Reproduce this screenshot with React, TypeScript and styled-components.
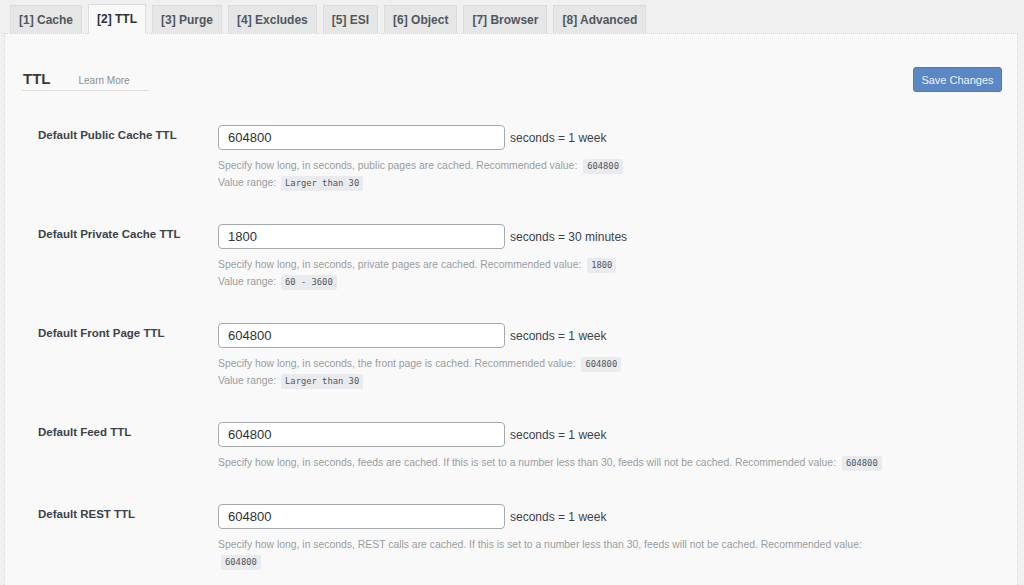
import React from "react";
import styled, { createGlobalStyle } from "styled-components";

const Global = createGlobalStyle`
  html, body { margin: 0; padding: 0; background: #f0f0f1; }
  body { font-family: "Liberation Sans", Arial, sans-serif; color: #3c434a; }
`;

const Page = styled.div`
  padding: 4px 6px 0 4px;
  width: 1024px;
  box-sizing: border-box;
  height: 585px;
  overflow: hidden;
`;

const TabBar = styled.div`
  display: flex;
  gap: 6px;
  padding-left: 6px;
  align-items: flex-end;
  height: 29px;
  position: relative;
  z-index: 1;
`;

const Tab = styled.div<{ $active?: boolean }>`
  box-sizing: border-box;
  height: ${(p) => (p.$active ? "30px" : "28px")};
  margin-bottom: ${(p) => (p.$active ? "-1px" : "0")};
  padding: 0 8px;
  display: flex;
  align-items: center;
  font-size: 12px;
  font-weight: 700;
  color: ${(p) => (p.$active ? "#2c3338" : "#50575e")};
  background: ${(p) => (p.$active ? "#f9f9f9" : "#e6e6e6")};
  border: 1px solid #dcdcde;
  border-bottom: ${(p) => (p.$active ? "1px solid #f9f9f9" : "none")};
`;

const Panel = styled.div`
  background: #f9f9f9;
  border: 1px dotted #d6d6d8;
  min-height: 560px;
  padding: 33px 15px 0 17px;
  box-sizing: border-box;
`;

const Header = styled.div`
  display: flex;
  justify-content: space-between;
  align-items: flex-start;
`;

const Title = styled.h3`
  margin: 3px 0 0;
  display: flex;
  align-items: baseline;
  gap: 28px;
  width: 125px;
  padding: 0 0 3px 1px;
  border-bottom: 1px solid #dcdcde;
  font-size: 15px;
  font-weight: 700;
  color: #3a3a3a;
`;

const LearnMore = styled.span`
  font-size: 10px;
  font-weight: 400;
  color: #8c8f94;
`;

const SaveButton = styled.button`
  width: 89px;
  height: 25px;
  background: #5b88c5;
  border: 1px solid #4f7bb8;
  border-radius: 3px;
  color: #eef3fa;
  font-family: inherit;
  font-size: 11px;
  padding: 0;
`;

const Rows = styled.div`
  display: flex;
  flex-direction: column;
  margin-top: 17px;
`;

const Row = styled.div`
  display: grid;
  grid-template-columns: 196px 1fr;
  padding: 16px 0 17px;
`;

const Label = styled.div`
  padding-left: 16px;
  padding-top: 4px;
  font-size: 11.5px;
  font-weight: 700;
  color: #3c434a;
`;

const Field = styled.div`
  display: flex;
  flex-direction: column;
`;

const InputLine = styled.div`
  display: flex;
  align-items: center;
  gap: 5px;
`;

const Input = styled.div`
  box-sizing: border-box;
  width: 287px;
  height: 25px;
  border: 1px solid #a7aaad;
  border-radius: 4px;
  background: #fff;
  padding-left: 9px;
  display: flex;
  align-items: center;
  font-size: 13px;
  color: #2c3338;
`;

const Unit = styled.span`
  font-size: 12px;
  color: #3c434a;
`;

const Desc = styled.div`
  margin-top: 7px;
  font-size: 10.4px;
  line-height: 17px;
  color: #9a9da0;
`;

const Code = styled.code`
  display: inline-block;
  line-height: 11px;
  font-family: "DejaVu Sans Mono", "Liberation Mono", monospace;
  font-size: 8.8px;
  color: #50575e;
  background: #e9ebee;
  padding: 2px 4px;
  border-radius: 2px;
  margin-left: 3px;
`;

const RangeCode = styled(Code)`
  margin-left: 2px;
`;

const tabs = ["[1] Cache", "[2] TTL", "[3] Purge", "[4] Excludes", "[5] ESI", "[6] Object", "[7] Browser", "[8] Advanced"];

type RowData = {
  label: string;
  value: string;
  unit: string;
  desc: string;
  rec: string;
  range?: string;
  recBreak?: boolean;
};

const rows: RowData[] = [
  { label: "Default Public Cache TTL", value: "604800", unit: "seconds = 1 week", desc: "Specify how long, in seconds, public pages are cached. Recommended value:", rec: "604800", range: "Larger than 30" },
  { label: "Default Private Cache TTL", value: "1800", unit: "seconds = 30 minutes", desc: "Specify how long, in seconds, private pages are cached. Recommended value:", rec: "1800", range: "60 - 3600" },
  { label: "Default Front Page TTL", value: "604800", unit: "seconds = 1 week", desc: "Specify how long, in seconds, the front page is cached. Recommended value:", rec: "604800", range: "Larger than 30" },
  { label: "Default Feed TTL", value: "604800", unit: "seconds = 1 week", desc: "Specify how long, in seconds, feeds are cached. If this is set to a number less than 30, feeds will not be cached. Recommended value:", rec: "604800" },
  { label: "Default REST TTL", value: "604800", unit: "seconds = 1 week", desc: "Specify how long, in seconds, REST calls are cached. If this is set to a number less than 30, feeds will not be cached. Recommended value:", rec: "604800", recBreak: true },
];

export default function App() {
  return (
    <Page>
      <Global />
      <TabBar>
        {tabs.map((t) => (
          <Tab key={t} $active={t === "[2] TTL"}>{t}</Tab>
        ))}
      </TabBar>
      <Panel>
        <Header>
          <Title>
            TTL <LearnMore>Learn More</LearnMore>
          </Title>
          <SaveButton>Save Changes</SaveButton>
        </Header>
        <Rows>
          {rows.map((r) => (
            <Row key={r.label}>
              <Label>{r.label}</Label>
              <Field>
                <InputLine>
                  <Input>{r.value}</Input>
                  <Unit>{r.unit}</Unit>
                </InputLine>
                <Desc>
                  {r.desc}
                  {r.recBreak ? <br /> : " "}
                  <Code>{r.rec}</Code>
                  {r.range && (
                    <>
                      <br />
                      Value range: <RangeCode>{r.range}</RangeCode>
                    </>
                  )}
                </Desc>
              </Field>
            </Row>
          ))}
        </Rows>
      </Panel>
    </Page>
  );
}
